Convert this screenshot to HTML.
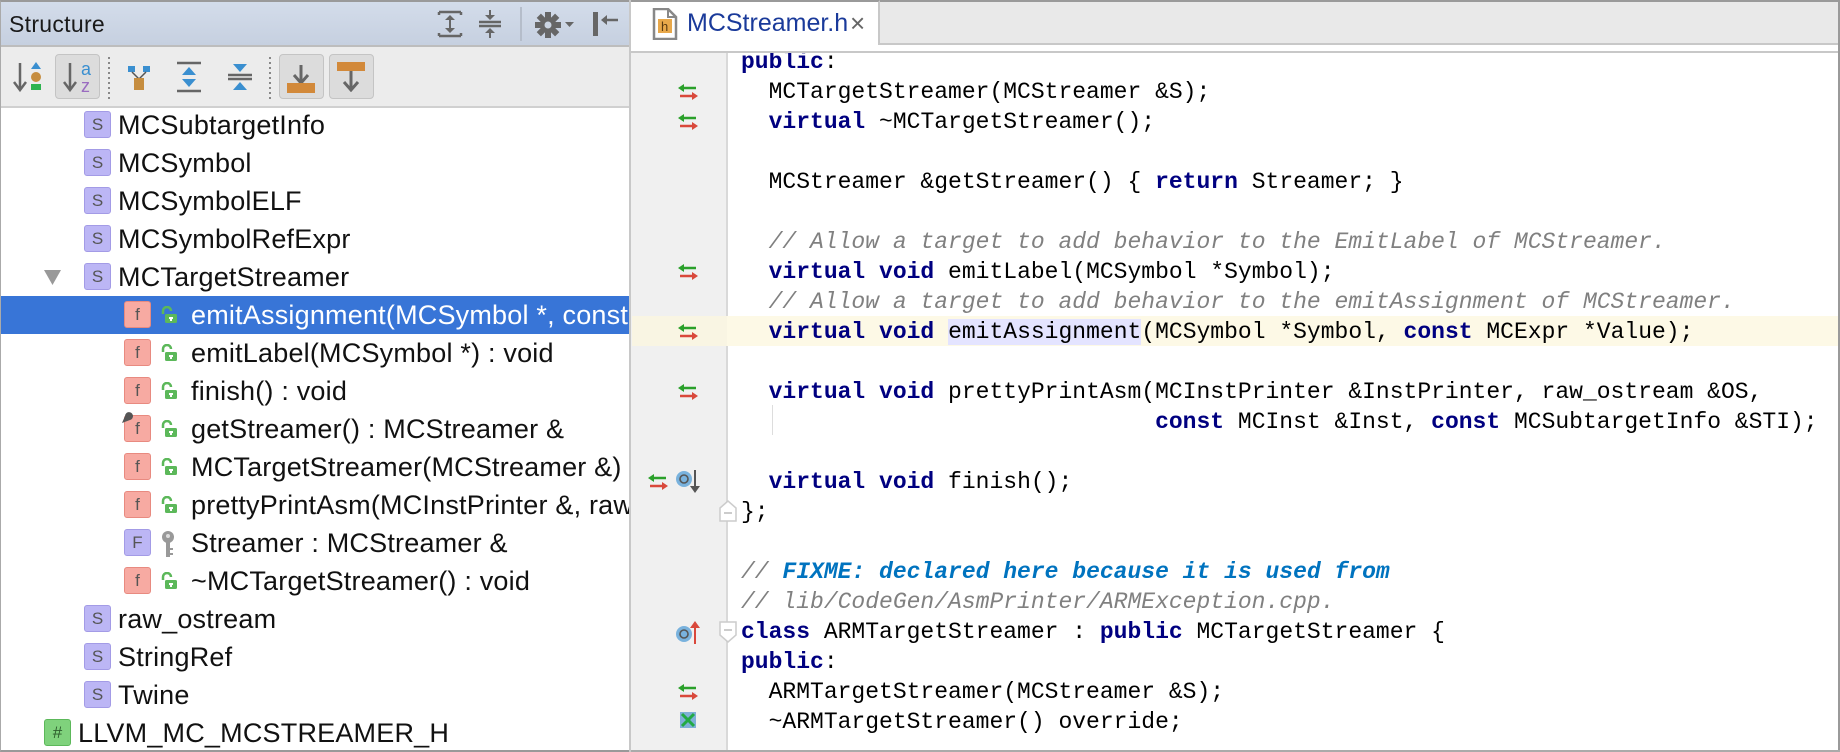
<!DOCTYPE html>
<html><head><meta charset="utf-8"><style>
*{margin:0;padding:0;box-sizing:border-box}
body{width:1840px;height:752px;overflow:hidden;background:#fff;position:relative;font-family:"Liberation Sans",sans-serif}
.abs{position:absolute}
#left{left:0;top:0;width:631px;height:752px;border-left:1px solid #aaa;border-top:2px solid #9a9a9a;border-bottom:2px solid #999;overflow:hidden}
#hdr{left:0;top:0;width:631px;height:45px;background:linear-gradient(#d3dcea,#c6d0e0);border-bottom:2px solid #bdbdbd}
#hdr .t{left:8px;top:9px;font-size:23px;color:#1a1a1a;letter-spacing:.3px}
#tb{left:0;top:45px;width:631px;height:61px;background:#ececec;border-bottom:2px solid #d0d0d0}
.btn{position:absolute;top:7px;width:45px;height:45px;border:1px solid #c4c4c4;border-radius:4px;background:#dcdcdc}
.dots{position:absolute;top:10px;width:2px;height:42px;background:repeating-linear-gradient(#888 0 2px,transparent 2px 5px)}
.row{position:absolute;left:0;width:631px;height:38px;font-size:27px;line-height:38px;color:#111;white-space:nowrap;letter-spacing:.2px}
.row.sel{background:#3875d7;color:#fff}
.ic{position:absolute;top:5px;width:27px;height:27px;border-radius:3px;font-size:17px;line-height:25px;text-align:center;color:#555;font-family:"Liberation Sans",sans-serif;letter-spacing:0}
.S{background:#bcb6f5;border:1px solid #a39be6}
.f{background:#f7aaa2;border:1px solid #e88a80}
.H{background:#7fd27c;border:1px solid #5cb85a;color:#2d5d2c}
.tx{position:absolute;top:0}
#tabbar{left:631px;top:0;width:1209px;height:45px;background:#e9e9e9;border-top:2px solid #9a9a9a;border-bottom:2px solid #c8c8c8}
#tab{left:631px;top:0;width:249px;height:53px;background:#fff;border-top:2px solid #9a9a9a;border-right:2px solid #c8c8c8}
#strip{left:631px;top:45px;width:1209px;height:8px;background:#fff;border-bottom:2px solid #c8c8c8}
#gutter{left:631px;top:53px;width:97px;height:699px;background:#f0f0f0;border-right:2px solid #d9d9d9}
#code{left:0;top:0;width:1840px;height:752px}
.ln{position:absolute;left:741px;height:30px;font-family:"Liberation Mono",monospace;font-size:23px;line-height:30px;white-space:pre;color:#000}
.k{color:#000080;font-weight:bold}
.c{color:#808080;font-style:italic}
.fx{color:#0073bf;font-weight:bold;font-style:italic}
</style></head><body>

<div id="left" class="abs">
 <div id="hdr" class="abs"><div class="abs t">Structure</div>
  <svg class="abs" style="left:436px;top:8px" width="26" height="28" viewBox="0 0 26 28"><path d="M2 2h22M2 26h22M2 2v3M24 2v3M2 26v-3M24 26v-3" stroke="#666" stroke-width="2.5" fill="none"/><path d="M13 6v16" stroke="#666" stroke-width="2"/><path d="M8 10l5-5 5 5zM8 18l5 5 5-5z" fill="#666"/></svg>
  <svg class="abs" style="left:476px;top:8px" width="26" height="28" viewBox="0 0 26 28"><path d="M2 12h22M2 16h22" stroke="#666" stroke-width="2.5"/><path d="M13 0v8M13 20v8" stroke="#666" stroke-width="2"/><path d="M8 5l5 5 5-5zM8 23l5-5 5 5z" fill="#666"/></svg>
  <div class="abs" style="left:519px;top:5px;width:2px;height:34px;background:#b5bdca"></div>
  <svg class="abs" style="left:534px;top:10px" width="42" height="26" viewBox="0 0 42 26"><g fill="#666"><circle cx="13" cy="13" r="8"/><rect x="10" y="0" width="6" height="26"/><rect x="0" y="10" width="26" height="6"/><rect x="10" y="0" width="6" height="26" transform="rotate(45 13 13)"/><rect x="10" y="0" width="6" height="26" transform="rotate(-45 13 13)"/></g><circle cx="13" cy="13" r="3.5" fill="#cbd4e2"/><path d="M30 10h9l-4.5 5z" fill="#666"/></svg>
  <svg class="abs" style="left:590px;top:9px" width="28" height="26" viewBox="0 0 28 26"><rect x="2" y="1" width="5" height="24" fill="#666"/><path d="M12 9h15" stroke="#666" stroke-width="2.5"/><path d="M10 9l6-5v10z" fill="#666"/></svg>
 </div>
 <div id="tb" class="abs">
  <svg class="abs" style="left:11px;top:14px" width="30" height="32" viewBox="0 0 30 32"><path d="M8 2v26" stroke="#666" stroke-width="2.5"/><path d="M2 21l6 8 6-8" stroke="#666" stroke-width="2.5" fill="none"/><path d="M19 8l5-7 5 7z" fill="#3a8fd0"/><circle cx="24" cy="16" r="5" fill="#c68d3f"/><rect x="19" y="23" width="10" height="6" fill="#2eb34f"/></svg>
  <div class="btn" style="left:54px"></div>
  <svg class="abs" style="left:60px;top:14px" width="36" height="32" viewBox="0 0 36 32"><path d="M9 2v26" stroke="#666" stroke-width="2.5"/><path d="M3 21l6 8 6-8" stroke="#666" stroke-width="2.5" fill="none"/><text x="20" y="14" font-size="18" fill="#3a8fd0" font-family="Liberation Sans">a</text><text x="20" y="31" font-size="18" fill="#9a6cc0" font-family="Liberation Sans">z</text></svg>
  <div class="dots" style="left:107px"></div>
  <svg class="abs" style="left:126px;top:18px" width="24" height="26" viewBox="0 0 24 26"><rect x="1" y="1" width="7" height="6" fill="#3a8fd0"/><rect x="16" y="1" width="7" height="6" fill="#3a8fd0"/><path d="M5 7l7 7 7-7" stroke="#555" stroke-width="1.5" fill="none"/><rect x="7" y="13" width="10" height="12" fill="#c68d3f"/></svg>
  <svg class="abs" style="left:175px;top:14px" width="26" height="32" viewBox="0 0 26 32"><path d="M1 2h24M1 30h24" stroke="#666" stroke-width="2.5"/><path d="M6 14l7-8 7 8zM6 18l7 8 7-8z" fill="#3a8fd0"/></svg>
  <svg class="abs" style="left:226px;top:14px" width="26" height="32" viewBox="0 0 26 32"><path d="M1 14h24M1 18h24" stroke="#666" stroke-width="2.5"/><path d="M6 3l7 8 7-8zM6 29l7-8 7 8z" fill="#3a8fd0"/></svg>
  <div class="dots" style="left:268px"></div>
  <div class="btn" style="left:278px"></div>
  <svg class="abs" style="left:285px;top:18px" width="30" height="28" viewBox="0 0 30 28"><path d="M15 0v16" stroke="#666" stroke-width="3"/><path d="M8 10l7 8 7-8" stroke="#666" stroke-width="3" fill="none"/><rect x="1" y="18" width="28" height="10" fill="#d2893a"/></svg>
  <div class="btn" style="left:328px"></div>
  <svg class="abs" style="left:335px;top:15px" width="30" height="30" viewBox="0 0 30 30"><rect x="1" y="0" width="28" height="9" fill="#d2893a"/><path d="M15 9v18" stroke="#666" stroke-width="3"/><path d="M8 20l7 8 7-8" stroke="#666" stroke-width="3" fill="none"/></svg>
 </div>
</div>

<div class="row" style="top:106px"><div class="ic S" style="left:84px">S</div><span class="tx" style="left:118px">MCSubtargetInfo</span></div>
<div class="row" style="top:144px"><div class="ic S" style="left:84px">S</div><span class="tx" style="left:118px">MCSymbol</span></div>
<div class="row" style="top:182px"><div class="ic S" style="left:84px">S</div><span class="tx" style="left:118px">MCSymbolELF</span></div>
<div class="row" style="top:220px"><div class="ic S" style="left:84px">S</div><span class="tx" style="left:118px">MCSymbolRefExpr</span></div>
<div class="row" style="top:258px"><svg class="abs" style="left:44px;top:12px" width="17" height="15"><path d="M0 0h17l-8.5 15z" fill="#999"/></svg><div class="ic S" style="left:84px">S</div><span class="tx" style="left:118px">MCTargetStreamer</span></div>

<svg width="0" height="0" style="position:absolute"><defs><g id="lock"><path d="M4 8V5a4 4 0 0 1 8 0" stroke="#5cb85a" stroke-width="2.5" fill="none"/><rect x="6" y="8" width="12" height="9" rx="1.5" fill="#5cb85a"/><rect x="10" y="11" width="4" height="2" fill="#fff"/><rect x="11" y="12" width="2" height="3" fill="#fff"/></g></defs></svg>

<div class="row sel" style="top:296px;width:630px;left:1px;overflow:hidden"><div class="ic f" style="left:123px">f</div><svg class="abs" style="left:158px;top:10px" width="20" height="18"><use href="#lock"/></svg><span class="tx" style="left:190px">emitAssignment(MCSymbol *, const MCExpr *) : void</span></div>
<div class="row" style="top:334px"><div class="ic f" style="left:124px">f</div><svg class="abs" style="left:159px;top:10px" width="20" height="18"><use href="#lock"/></svg><span class="tx" style="left:191px">emitLabel(MCSymbol *) : void</span></div>
<div class="row" style="top:372px"><div class="ic f" style="left:124px">f</div><svg class="abs" style="left:159px;top:10px" width="20" height="18"><use href="#lock"/></svg><span class="tx" style="left:191px">finish() : void</span></div>
<div class="row" style="top:410px"><div class="ic f" style="left:124px">f</div><svg class="abs" style="left:120px;top:1px" width="14" height="14"><path d="M2 12L5 5a4 4 0 1 1 5 4z" fill="#555"/></svg><svg class="abs" style="left:159px;top:10px" width="20" height="18"><use href="#lock"/></svg><span class="tx" style="left:191px">getStreamer() : MCStreamer &amp;</span></div>
<div class="row" style="top:448px"><div class="ic f" style="left:124px">f</div><svg class="abs" style="left:159px;top:10px" width="20" height="18"><use href="#lock"/></svg><span class="tx" style="left:191px">MCTargetStreamer(MCStreamer &amp;)</span></div>
<div class="row" style="top:486px;width:630px;overflow:hidden"><div class="ic f" style="left:124px">f</div><svg class="abs" style="left:159px;top:10px" width="20" height="18"><use href="#lock"/></svg><span class="tx" style="left:191px">prettyPrintAsm(MCInstPrinter &amp;, raw_ostream &amp;)</span></div>
<div class="row" style="top:524px"><div class="ic S" style="left:124px">F</div><svg class="abs" style="left:160px;top:6px" width="16" height="28"><circle cx="8" cy="7" r="6" fill="#999"/><circle cx="8" cy="6" r="2" fill="#ddd"/><rect x="6" y="11" width="4" height="16" fill="#999"/><rect x="10" y="18" width="3" height="2" fill="#999"/><rect x="10" y="23" width="3" height="2" fill="#999"/></svg><span class="tx" style="left:191px">Streamer : MCStreamer &amp;</span></div>
<div class="row" style="top:562px"><div class="ic f" style="left:124px">f</div><svg class="abs" style="left:159px;top:10px" width="20" height="18"><use href="#lock"/></svg><span class="tx" style="left:191px">~MCTargetStreamer() : void</span></div>
<div class="row" style="top:600px"><div class="ic S" style="left:84px">S</div><span class="tx" style="left:118px">raw_ostream</span></div>
<div class="row" style="top:638px"><div class="ic S" style="left:84px">S</div><span class="tx" style="left:118px">StringRef</span></div>
<div class="row" style="top:676px"><div class="ic S" style="left:84px">S</div><span class="tx" style="left:118px">Twine</span></div>
<div class="row" style="top:714px"><div class="ic H" style="left:44px">#</div><span class="tx" style="left:78px">LLVM_MC_MCSTREAMER_H</span></div>
<div class="abs" style="left:629px;top:0;width:2px;height:752px;background:#c8c8c8"></div>

<div id="tabbar" class="abs"></div>
<div id="tab" class="abs">
 <svg class="abs" style="left:21px;top:6px" width="26" height="32" viewBox="0 0 26 32"><path d="M2 1h14l8 8v22H2z" fill="#fff" stroke="#888" stroke-width="2.5"/><path d="M16 1v8h8" fill="none" stroke="#888" stroke-width="2"/><rect x="6" y="11" width="14" height="14" fill="#e8a84a"/><text x="9" y="23" font-size="13" fill="#5a3a10" font-family="Liberation Sans">h</text></svg>
 <div class="abs" style="left:56px;top:7px;font-size:25px;color:#1a3a9a">MCStreamer.h</div>
 <div class="abs" style="left:219px;top:6px;font-size:26px;color:#666">×</div>
</div>
<div id="strip" class="abs"></div>
<div id="gutter" class="abs"></div>
<div class="abs" style="left:632px;top:316px;width:1206px;height:30px;background:#fdf9e6"></div>
<div class="abs" style="left:632px;top:316px;width:95px;height:30px;background:#f9f5e3"></div>
<div class="abs" style="left:1838px;top:0;width:2px;height:752px;background:#9a9a9a"></div>
<div class="abs" style="left:631px;top:750px;width:1209px;height:2px;background:#aaa"></div>
<div class="abs" style="left:772px;top:405px;width:1px;height:30px;background:#ddd"></div>

<svg width="0" height="0" style="position:absolute"><defs><g id="sw"><path d="M4 4h14" stroke="#2aa02a" stroke-width="2.5"/><path d="M0 4l6-4v8z" fill="#2aa02a"/><path d="M2 12h14" stroke="#d9483b" stroke-width="2.5"/><path d="M20 12l-6-4v8z" fill="#d9483b"/></g></defs></svg>
<svg class="abs" style="left:678px;top:84px" width="20" height="16"><use href="#sw"/></svg>
<svg class="abs" style="left:678px;top:114px" width="20" height="16"><use href="#sw"/></svg>
<svg class="abs" style="left:678px;top:264px" width="20" height="16"><use href="#sw"/></svg>
<svg class="abs" style="left:678px;top:324px" width="20" height="16"><use href="#sw"/></svg>
<svg class="abs" style="left:678px;top:384px" width="20" height="16"><use href="#sw"/></svg>
<svg class="abs" style="left:648px;top:474px" width="20" height="16"><use href="#sw"/></svg>
<svg class="abs" style="left:678px;top:684px" width="20" height="16"><use href="#sw"/></svg>
<svg class="abs" style="left:675px;top:469px" width="26" height="26"><circle cx="9" cy="10" r="8" fill="#79b2dd"/><circle cx="9" cy="10" r="4" fill="none" stroke="#555" stroke-width="1.6"/><path d="M20 1v18" stroke="#555" stroke-width="2"/><path d="M15 17h10l-5 7z" fill="#555"/></svg>
<svg class="abs" style="left:675px;top:619px" width="26" height="26"><circle cx="9" cy="15" r="8" fill="#79b2dd"/><circle cx="9" cy="15" r="4" fill="none" stroke="#555" stroke-width="1.6"/><path d="M20 25V7" stroke="#d9483b" stroke-width="2"/><path d="M15 9h10l-5-7z" fill="#d9483b"/></svg>
<svg class="abs" style="left:679px;top:711px" width="18" height="18" viewBox="0 0 18 18"><rect x="1" y="1" width="16" height="16" fill="#7fb0d8"/><path d="M3 15L15 3M3 3l12 12" stroke="#22aa44" stroke-width="3"/></svg>
<svg class="abs" style="left:719px;top:500px" width="18" height="22"><path d="M1 21V8l8-7 8 7v13z" fill="#fff" stroke="#ccc" stroke-width="1.5"/><path d="M5 13h8" stroke="#bbb" stroke-width="1.5"/></svg>
<svg class="abs" style="left:719px;top:621px" width="18" height="22"><path d="M1 1v13l8 7 8-7V1z" fill="#fff" stroke="#ccc" stroke-width="1.5"/><path d="M5 9h8" stroke="#bbb" stroke-width="1.5"/></svg>

<div id="code" class="abs" style="clip-path:inset(53px 0 0 0)">
<div class="ln" style="top:47px;left:741px"><span class="k">public</span>:</div>
<div class="ln" style="top:77px">  MCTargetStreamer(MCStreamer &amp;S);</div>
<div class="ln" style="top:107px">  <span class="k">virtual</span> ~MCTargetStreamer();</div>
<div class="ln" style="top:167px">  MCStreamer &amp;getStreamer() { <span class="k">return</span> Streamer; }</div>
<div class="ln" style="top:227px">  <span class="c">// Allow a target to add behavior to the EmitLabel of MCStreamer.</span></div>
<div class="ln" style="top:257px">  <span class="k">virtual void</span> emitLabel(MCSymbol *Symbol);</div>
<div class="ln" style="top:287px">  <span class="c">// Allow a target to add behavior to the emitAssignment of MCStreamer.</span></div>
<div class="ln" style="top:317px">  <span class="k">virtual void</span> <span style="background:#e4e4ff">emitAssignment</span>(MCSymbol *Symbol, <span class="k">const</span> MCExpr *Value);</div>
<div class="ln" style="top:377px">  <span class="k">virtual void</span> prettyPrintAsm(MCInstPrinter &amp;InstPrinter, raw_ostream &amp;OS,</div>
<div class="ln" style="top:407px">                              <span class="k">const</span> MCInst &amp;Inst, <span class="k">const</span> MCSubtargetInfo &amp;STI);</div>
<div class="ln" style="top:467px">  <span class="k">virtual void</span> finish();</div>
<div class="ln" style="top:497px">};</div>
<div class="ln" style="top:557px"><span class="c">// </span><span class="fx">FIXME: declared here because it is used from</span></div>
<div class="ln" style="top:587px"><span class="c">// lib/CodeGen/AsmPrinter/ARMException.cpp.</span></div>
<div class="ln" style="top:617px"><span class="k">class</span> ARMTargetStreamer : <span class="k">public</span> MCTargetStreamer {</div>
<div class="ln" style="top:647px"><span class="k">public</span>:</div>
<div class="ln" style="top:677px">  ARMTargetStreamer(MCStreamer &amp;S);</div>
<div class="ln" style="top:707px">  ~ARMTargetStreamer() override;</div>
</div>
</body></html>
